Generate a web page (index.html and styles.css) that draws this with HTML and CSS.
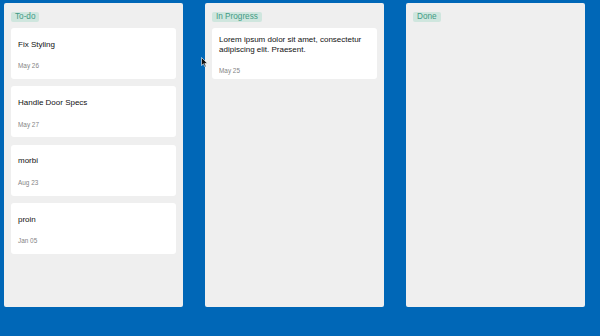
FILE: index.html
```html
<!DOCTYPE html>
<html>
<head>
<meta charset="utf-8">
<link rel="stylesheet" href="styles.css">
</head>
<body>
<div class="board">
  <section class="column">
    <span class="tag">To-do</span>
    <div class="cards">
      <div class="card"><div class="title">Fix Styling</div><div class="date">May 26</div></div>
      <div class="card"><div class="title">Handle Door Specs</div><div class="date">May 27</div></div>
      <div class="card"><div class="title">morbi</div><div class="date">Aug 23</div></div>
      <div class="card"><div class="title">proin</div><div class="date">Jan 05</div></div>
    </div>
  </section>
  <section class="column">
    <span class="tag">In Progress</span>
    <div class="cards">
      <div class="card"><div class="title">Lorem ipsum dolor sit amet, consectetur adipiscing elit. Praesent.</div><div class="date">May 25</div></div>
    </div>
  </section>
  <section class="column">
    <span class="tag">Done</span>
    <div class="cards"></div>
  </section>
</div>
<svg class="cursor" width="7" height="11" viewBox="0 0 7 11"><path d="M0.5 0.5 L0.5 8.5 L2.5 6.8 L4 10 L5.2 9.5 L3.8 6.4 L6.3 6.3 Z" fill="#111" stroke="#fff" stroke-width="0.6"/></svg>
</body>
</html>
```

FILE: styles.css
```css
html, body {
  margin: 0;
  padding: 0;
}
body {
  width: 600px;
  height: 336px;
  background: #0067b7;
  font-family: "Liberation Sans", Arial, sans-serif;
  position: relative;
  overflow: hidden;
}
.board {
  display: flex;
  gap: 22px;
  padding: 3px 0 0 4px;
}
.column {
  width: 179px;
  height: 304px;
  box-sizing: border-box;
  background: #efefef;
  border-radius: 2px;
  padding: 9px 7px;
  display: flex;
  flex-direction: column;
  align-items: flex-start;
}
.tag {
  display: inline-block;
  background: #cfe6de;
  color: #3f9a84;
  font-size: 8.2px;
  line-height: 10px;
  padding: 0 4px;
  border-radius: 2px;
}
.cards {
  margin-top: 6px;
  display: flex;
  flex-direction: column;
  gap: 7.3px;
  align-self: stretch;
}
.card {
  height: 51px;
  box-sizing: border-box;
  background: #ffffff;
  border-radius: 3px;
  padding: 3px 7px 0;
  display: flex;
  flex-direction: column;
  justify-content: center;
  gap: 13px;
}
.title {
  font-size: 8px;
  line-height: 9.5px;
  color: #111111;
}
.date {
  font-size: 6.4px;
  line-height: 8px;
  color: #858585;
}
.cursor {
  position: absolute;
  left: 201px;
  top: 57px;
}
```
